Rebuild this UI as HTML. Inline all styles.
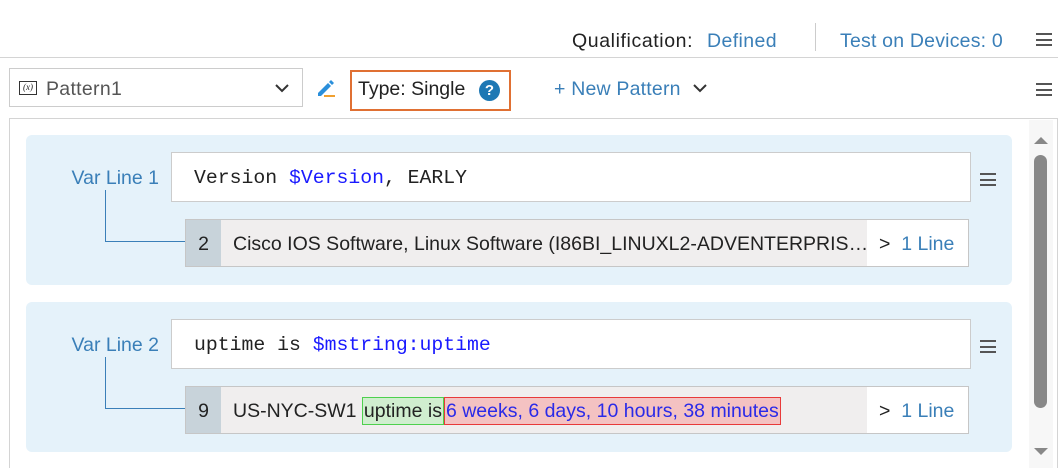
<!DOCTYPE html>
<html><head><style>
*{box-sizing:border-box;margin:0;padding:0}
html,body{width:1058px;height:468px;overflow:hidden}
body{background:#fff;font-family:"Liberation Sans",sans-serif;font-size:19.5px;color:#222;position:relative}
.a{position:absolute;white-space:nowrap}
.blue{color:#3a7fb8}
.ham{position:absolute;width:16px;height:13px;border-top:2px solid #555;border-bottom:2px solid #555}
.ham:after{content:"";position:absolute;left:0;right:0;top:3.5px;height:2px;background:#555}
.blk{position:absolute;left:26px;width:986px;height:150px;background:#e5f2fa;border-radius:6px}
.inp{position:absolute;left:145px;top:17px;width:800px;height:50px;background:#fff;border:1px solid #ccc;font-family:"Liberation Mono",monospace;font-size:19.8px;padding:14px 0 0 22px}
.row{position:absolute;left:159px;top:84px;width:784px;height:48px;border:1px solid #c6c6c6;background:#f0eeee;white-space:nowrap;overflow:hidden}
.num{position:absolute;left:0;top:0;width:35px;height:46px;background:#c8d3da;text-align:center;line-height:48px}
.txt{position:absolute;left:47px;top:0;line-height:48px}
.ln{position:absolute;right:0;top:0;width:101px;height:46px;background:#fff;line-height:48px;padding-left:12px}
.lbl{position:absolute;left:0;width:133px;text-align:right;top:32px;color:#3a7fb8}
.vl{position:absolute;left:79px;top:55px;width:1px;height:52px;background:#3a7fb8}
.hl{position:absolute;left:79px;top:106px;width:80px;height:1px;background:#3a7fb8}
</style></head><body>
<div class="a" style="left:572px;top:30px;letter-spacing:0.6px">Qualification:</div>
<div class="a blue" style="left:707px;top:30px;letter-spacing:0.4px">Defined</div>
<div class="a" style="left:815px;top:23px;width:1px;height:28px;background:#ccc"></div>
<div class="a blue" style="left:840px;top:30px;letter-spacing:0.2px">Test on Devices: 0</div>
<div class="ham" style="left:1036px;top:33px"></div>
<div class="a" style="left:0;top:57px;width:1058px;height:1px;background:#d4d4d4"></div>

<div class="a" style="left:9px;top:68px;width:294px;height:39px;border:1px solid #ccc"></div>
<div class="a" style="left:19px;top:81px;width:18px;height:14px;border:1.5px solid #333;font-size:9px;line-height:11px;text-align:center;font-family:'Liberation Serif',serif;font-style:italic">(x)</div>
<div class="a" style="left:46px;top:78px;color:#555;letter-spacing:0.3px">Pattern1</div>
<svg class="a" style="left:274px;top:82px" width="16" height="12"><path d="M2 3l6 6 6-6" stroke="#333" stroke-width="2" fill="none"/></svg>
<svg class="a" style="left:314px;top:77px" width="22" height="22"><path d="M4 16l10-10 3 3-10 10H4z" fill="#2a8fdb"/><path d="M15 5l2-2 3 3-2 2z" fill="#2a8fdb"/><rect x="10" y="18" width="11" height="2" fill="#f0a030"/></svg>
<div class="a" style="left:350px;top:70px;width:161px;height:41px;border:2px solid #e07033"></div>
<div class="a" style="left:358px;top:78px">Type: Single</div>
<div class="a" style="left:479px;top:80px;width:21px;height:21px;border-radius:50%;background:#1e78b4;color:#fff;font-size:15px;font-weight:bold;text-align:center;line-height:21px">?</div>
<div class="a blue" style="left:554px;top:78px;letter-spacing:0.2px">+ New Pattern</div>
<svg class="a" style="left:692px;top:82px" width="16" height="12"><path d="M2 3l6 6 6-6" stroke="#333" stroke-width="2" fill="none"/></svg>
<div class="ham" style="left:1036px;top:83px"></div>

<div class="a" style="left:9px;top:118px;width:1049px;height:360px;border:1px solid #d4d4d4"></div>
<div class="a" style="left:1029px;top:120px;width:24px;height:348px;background:#f7f7f7"></div>
<div class="a" style="left:1034px;top:137px;width:0;height:0;border-left:7px solid transparent;border-right:7px solid transparent;border-bottom:7px solid #888"></div>
<div class="a" style="left:1034px;top:155px;width:13px;height:253px;background:#888;border-radius:7px"></div>
<div class="a" style="left:1034px;top:448px;width:0;height:0;border-left:7px solid transparent;border-right:7px solid transparent;border-top:7px solid #888"></div>

<div class="blk" style="top:135px">
<div class="lbl">Var Line 1</div><div class="vl"></div><div class="hl"></div>
<div class="inp">Version <span style="color:#1a1aff">$Version</span>, EARLY</div>
<div class="ham" style="left:954px;top:38px"></div>
<div class="row"><div class="num">2</div><div class="txt">Cisco IOS Software, Linux Software (I86BI_LINUXL2-ADVENTERPRIS…</div><div class="ln">&gt;&nbsp; <span class="blue">1 Line</span></div></div>
</div>

<div class="blk" style="top:302px">
<div class="lbl">Var Line 2</div><div class="vl"></div><div class="hl"></div>
<div class="inp">uptime is <span style="color:#1a1aff">$mstring:uptime</span></div>
<div class="ham" style="left:954px;top:38px"></div>
<div class="row"><div class="num">9</div><div class="txt">US-NYC-SW1 <span style="background:#d0eecf;border:1px solid #4ed04e;padding:2px 1px">uptime is</span><span style="background:#f4c2c2;border:1px solid #e83a3a;padding:2px 1px;color:#2a2ae8">6 weeks, 6 days, 10 hours, 38 minutes</span></div><div class="ln">&gt;&nbsp; <span class="blue">1 Line</span></div></div>
</div>
</body></html>
